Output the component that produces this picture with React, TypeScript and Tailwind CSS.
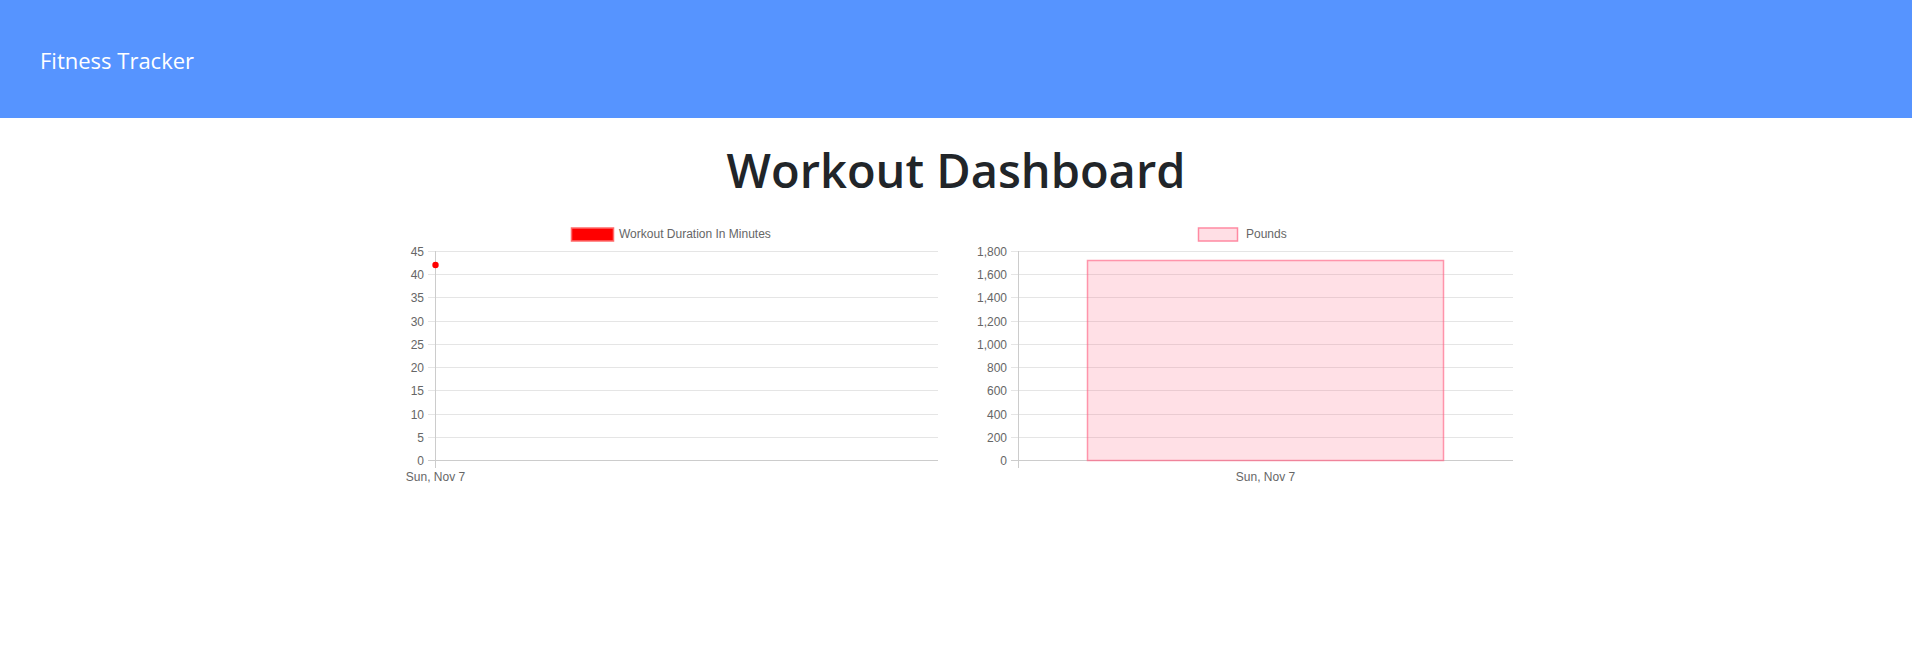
import React from "react";

const AXIS_FONT = "'Liberation Sans', Arial, sans-serif";

const TOP = 36; // y of highest gridline inside the chart svg
const ZERO = 245; // y of the zero line inside the chart svg

function gridY(i: number, n: number) {
  return Math.round(ZERO - ((ZERO - TOP) * i) / n) + 0.5;
}

interface AxisProps {
  axisX: number;
  right: number;
  labels: string[];
}

function YAxis({ axisX, right, labels }: AxisProps) {
  const n = labels.length - 1;
  return (
    <g>
      {labels.map((label, i) => {
        const y = gridY(i, n);
        return (
          <g key={label}>
            <line
              x1={axisX - 7}
              x2={right}
              y1={y}
              y2={y}
              stroke={i === 0 ? "#cccccc" : "#e5e5e5"}
              strokeWidth={1}
            />
            <text
              x={axisX - 11}
              y={y + 4}
              textAnchor="end"
              fontSize={12}
              fill="#666"
              fontFamily={AXIS_FONT}
            >
              {label}
            </text>
          </g>
        );
      })}
      <line x1={axisX + 0.5} x2={axisX + 0.5} y1={TOP} y2={ZERO + 8} stroke="#cccccc" strokeWidth={1} />
    </g>
  );
}

function DurationChart() {
  const axisX = 39;
  const labels = ["0", "5", "10", "15", "20", "25", "30", "35", "40", "45"];
  const cy = ZERO - (42 / 45) * (ZERO - TOP);
  return (
    <svg width={560} height={270} className="block">
      <rect x={175.5} y={13} width={42} height={13} fill="#ff0000" stroke="#ff6b6b" strokeWidth={1.5} />
      <text x={223} y={23} fontSize={12} fill="#666" fontFamily={AXIS_FONT}>
        Workout Duration In Minutes
      </text>
      <YAxis axisX={axisX} right={542} labels={labels} />
      <circle cx={axisX + 0.5} cy={cy} r={3.2} fill="#ff0000" />
      <text x={axisX + 0.5} y={266} textAnchor="middle" fontSize={12} fill="#666" fontFamily={AXIS_FONT}>
        Sun, Nov 7
      </text>
    </svg>
  );
}

function PoundsChart() {
  const axisX = 62;
  const labels = ["0", "200", "400", "600", "800", "1,000", "1,200", "1,400", "1,600", "1,800"];
  const barTop = ZERO - (1722 / 1800) * (ZERO - TOP);
  return (
    <svg width={560} height={270} className="block">
      <rect x={242.5} y={13} width={39} height={13} fill="#ffdfe5" stroke="#ff8aa2" strokeWidth={1.5} />
      <text x={290} y={23} fontSize={12} fill="#666" fontFamily={AXIS_FONT}>
        Pounds
      </text>
      <YAxis axisX={axisX} right={557} labels={labels} />
      <rect
        x={131.5}
        y={Math.round(barTop) + 0.5}
        width={356}
        height={ZERO - Math.round(barTop)}
        fill="rgba(255,99,132,0.2)"
        stroke="rgba(255,99,132,0.65)"
        strokeWidth={1.5}
      />
      <text x={309.5} y={266} textAnchor="middle" fontSize={12} fill="#666" fontFamily={AXIS_FONT}>
        Sun, Nov 7
      </text>
    </svg>
  );
}

export default function App() {
  return (
    <div className="min-h-screen bg-white" style={{ fontFamily: "'Open Sans', 'Noto Sans', sans-serif" }}>
      <header className="flex h-[118px] items-center bg-[#5694ff] px-[40px] pt-[2px]">
        <span className="text-[22px] leading-none text-white">Fitness Tracker</span>
      </header>

      <main>
        <h1 className="pt-[20px] text-center text-[47px] font-semibold leading-[64px] text-[#212529]">
          Workout Dashboard
        </h1>

        <div className="mt-[13px] flex justify-center">
          <div className="w-[560px]">
            <DurationChart />
          </div>
          <div className="w-[560px]">
            <PoundsChart />
          </div>
        </div>
      </main>
    </div>
  );
}
